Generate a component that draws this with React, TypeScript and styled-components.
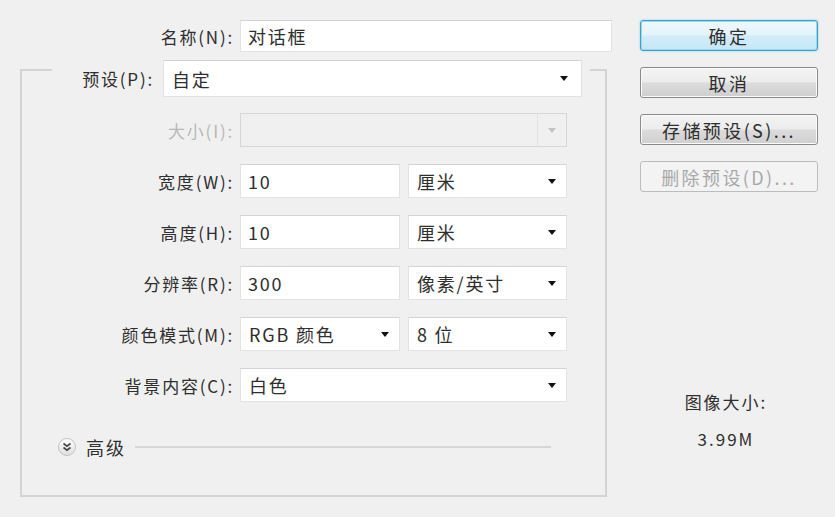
import React from 'react';
import styled, {createGlobalStyle, css} from 'styled-components';

const GlobalStyle = createGlobalStyle`
  html, body {
    margin: 0;
    padding: 0;
    background: #f0f0f0;
  }
  body {
    font-family: "Noto Sans CJK SC", "Noto Sans", sans-serif;
    color: #333;
  }
`

const Dialog = styled.div`
  display: flex;
  width: 835px;
  height: 517px;
  box-sizing: border-box;
  padding: 20px 0 0 20px;
  background: #f0f0f0;
`

const LeftColumn = styled.div`
  display: flex;
  flex-direction: column;
  width: 592px;
`

const RightColumn = styled.div`
  display: flex;
  flex-direction: column;
  width: 178px;
  margin-left: 28px;
  gap: 16px;
`

const Row = styled.div`
  display: grid;
  grid-template-columns: 214px 1fr;
  column-gap: 6px;
  align-items: center;
  height: 32px;
`

const Label = styled.label<{disabled?: boolean}>`
  text-align: right;
  font-size: 17px;
  letter-spacing: 1.8px;
  white-space: nowrap;
  color: ${p => (p.disabled ? '#b8b8b8' : '#2e2e2e')};
`

const fieldBase = css`
  box-sizing: border-box;
  height: 100%;
  border: 1px solid #e3e3e3;
  border-top-color: #d3d3d3;
  background: #fff;
  font-family: "Noto Sans CJK SC", "Noto Sans", sans-serif;
  font-size: 18px;
  letter-spacing: 1.8px;
  color: #2e2e2e;
`

const TextInput = styled.input`
  ${fieldBase};
  width: 100%;
  padding: 0 7px;
  outline: none;
`

const SelectBox = styled.div<{disabled?: boolean}>`
  ${fieldBase};
  display: flex;
  align-items: center;
  justify-content: space-between;
  padding: 0 10px 0 8px;
  white-space: nowrap;
  ${p => p.disabled && css`
    background: #f0f0f0;
    border-color: #d6d6d6;
  `}
`

const Arrow = styled.span<{disabled?: boolean}>`
  display: flex;
  align-items: center;
  height: 100%;
  padding-left: 10px;
  ${p => p.disabled && css`
    border-left: 1px solid #e2e2e2;
  `}
  &::after {
    content: "";
    border-left: 4px solid transparent;
    border-right: 4px solid transparent;
    border-top: 5px solid ${p => (p.disabled ? '#c4c4c4' : '#111')};
  }
`

const GroupBox = styled.fieldset`
  margin: 8px 5px 0 0;
  padding: 0 0 38px 0;
  border: 2px solid #d4d4d4;
  min-width: 0;
`

const PresetLegend = styled.legend`
  display: flex;
  align-items: flex-start;
  height: 20px;
  margin-left: 30px;
  padding: 0 8px 0 0;
`

const PresetLabel = styled(Label)`
  width: 102px;
  height: 37px;
  line-height: 37px;
  flex: none;
`

const PresetSelect = styled(SelectBox)`
  width: 419px;
  height: 37px;
  margin-left: 9px;
  padding-right: 13px;
  flex: none;
`

const FieldRows = styled.div`
  display: flex;
  flex-direction: column;
  gap: 17px;
  margin-top: 33px;
`

const FieldRow = styled.div`
  display: grid;
  grid-template-columns: 212px 327px;
  column-gap: 6px;
  align-items: center;
  height: 34px;
`

const Pair = styled.div`
  display: grid;
  grid-template-columns: 160px 159px;
  column-gap: 8px;
  height: 100%;
`

const AdvancedRow = styled.div`
  display: flex;
  align-items: center;
  gap: 9px;
  margin: 35px 0 0 35px;
  width: 494px;
  height: 20px;
`

const AdvancedText = styled.span`
  font-size: 18px;
  letter-spacing: 2px;
  color: #2e2e2e;
`

const Rule = styled.div`
  flex: 1;
  height: 0;
  border-top: 2px solid #d6d6d6;
`

const Button = styled.button<{primary?: boolean}>`
  box-sizing: border-box;
  height: 31px;
  width: 100%;
  padding: 0;
  border: 1px solid #8a8a8a;
  border-radius: 3px;
  font-family: "Noto Sans CJK SC", "Noto Sans", sans-serif;
  font-size: 18px;
  letter-spacing: 2.4px;
  color: #2e2e2e;
  background: linear-gradient(#f4f4f4 0%, #ececec 48%, #dcdcdc 52%, #cfcfcf 100%);
  box-shadow: inset 0 0 0 1px #fbfbfb;
  ${p => p.primary && css`
    border-color: #3aa0cc;
    background: linear-gradient(#eef8fd 0%, #e4f4fb 48%, #d2edf9 52%, #c6e7f6 100%);
    box-shadow: inset 0 0 0 1px #9ad8f0, 0 0 2px #7cc7e6;
  `}
  &:disabled {
    border-color: #b9bdc0;
    background: #f3f3f3;
    color: #a8a8a8;
    box-shadow: none;
  }
`

const ImageInfo = styled.div`
  display: flex;
  flex-direction: column;
  align-items: center;
  gap: 12px;
  margin-top: 181px;
  padding-right: 6px;
  font-size: 17px;
  letter-spacing: 2px;
  color: #2e2e2e;
`

function AdvancedIcon() {
  return (
    <svg width="20" height="20" viewBox="0 0 20 20">
      <defs>
        <linearGradient id="adv" x1="0" y1="0" x2="0" y2="1">
          <stop offset="0" stopColor="#ffffff"/>
          <stop offset="1" stopColor="#dedede"/>
        </linearGradient>
      </defs>
      <circle cx="10" cy="10" r="8.5" fill="url(#adv)" stroke="#c2c2c2"/>
      <path d="M6.5 6.5 L10 9.2 L13.5 6.5 M6.5 10.5 L10 13.2 L13.5 10.5" fill="none" stroke="#444" strokeWidth="1.6"/>
    </svg>
  );
}

function Select({value, disabled}: {value?: string; disabled?: boolean}) {
  return (
    <SelectBox disabled={disabled}>
      <span>{value}</span>
      <Arrow disabled={disabled}/>
    </SelectBox>
  );
}

export default function App() {
  return (
    <Dialog>
      <GlobalStyle/>
      <LeftColumn>
        <Row>
          <Label>名称(N):</Label>
          <TextInput defaultValue="对话框"/>
        </Row>
        <GroupBox>
          <PresetLegend>
            <PresetLabel>预设(P):</PresetLabel>
            <PresetSelect>
              <span>自定</span>
              <Arrow/>
            </PresetSelect>
          </PresetLegend>
          <FieldRows>
            <FieldRow>
              <Label disabled>大小(I):</Label>
              <Select disabled/>
            </FieldRow>
            <FieldRow>
              <Label>宽度(W):</Label>
              <Pair>
                <TextInput defaultValue="10"/>
                <Select value="厘米"/>
              </Pair>
            </FieldRow>
            <FieldRow>
              <Label>高度(H):</Label>
              <Pair>
                <TextInput defaultValue="10"/>
                <Select value="厘米"/>
              </Pair>
            </FieldRow>
            <FieldRow>
              <Label>分辨率(R):</Label>
              <Pair>
                <TextInput defaultValue="300"/>
                <Select value="像素/英寸"/>
              </Pair>
            </FieldRow>
            <FieldRow>
              <Label>颜色模式(M):</Label>
              <Pair>
                <Select value="RGB 颜色"/>
                <Select value="8 位"/>
              </Pair>
            </FieldRow>
            <FieldRow>
              <Label>背景内容(C):</Label>
              <Select value="白色"/>
            </FieldRow>
          </FieldRows>
          <AdvancedRow>
            <AdvancedIcon/>
            <AdvancedText>高级</AdvancedText>
            <Rule/>
          </AdvancedRow>
        </GroupBox>
      </LeftColumn>
      <RightColumn>
        <Button primary>确定</Button>
        <Button>取消</Button>
        <Button>存储预设(S)...</Button>
        <Button disabled>删除预设(D)...</Button>
        <ImageInfo>
          <span>图像大小:</span>
          <span>3.99M</span>
        </ImageInfo>
      </RightColumn>
    </Dialog>
  );
}
